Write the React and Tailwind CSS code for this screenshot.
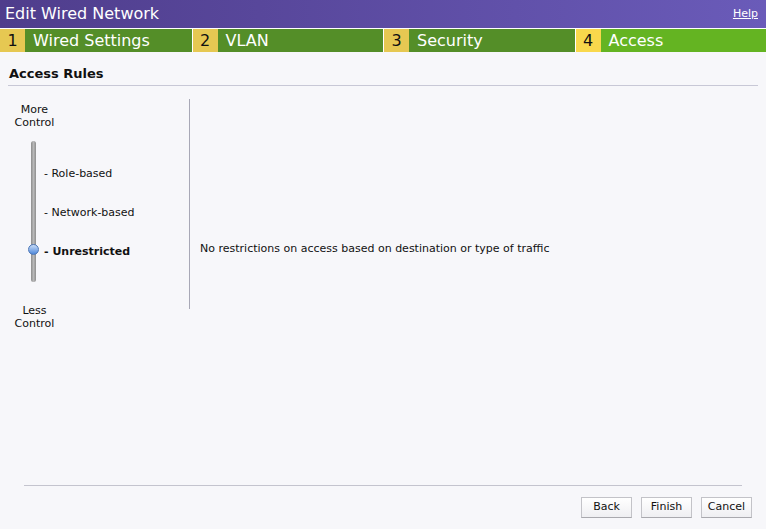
const steps = [
  { n: "1", label: "Wired Settings" },
  { n: "2", label: "VLAN" },
  { n: "3", label: "Security" },
  { n: "4", label: "Access", active: true },
];

function App() {
  return (
    <div
      className="w-[766px] h-[529px] bg-[#f7f7fa] flex flex-col text-[#111]"
      style={{ fontFamily: '"DejaVu Sans", Verdana, sans-serif' }}
    >
      <div className="h-[28px] flex items-center justify-between pl-[5px] pr-[8px] bg-gradient-to-r from-[#4f3d8c] to-[#6a5bb9] text-white">
        <span className="text-[16px] leading-none">Edit Wired Network</span>
        <a className="text-[11px] underline mt-[1px]">Help</a>
      </div>

      <div className="h-[24px] flex border-t border-white">
        {steps.map((s, i) => (
          <div
            key={s.n}
            className={`w-[192px] flex ${i > 0 ? "border-l border-white" : ""}`}
          >
            <div
              className={`w-[25px] flex items-center justify-center text-[16px] ${
                s.active ? "bg-[#f9d84c]" : "bg-[#e6c852]"
              }`}
            >
              {s.n}
            </div>
            <div
              className={`flex-1 flex items-center pl-[8px] text-white text-[16px] ${
                s.active ? "bg-[#64b422]" : "bg-[#548e28]"
              }`}
            >
              {s.label}
            </div>
          </div>
        ))}
      </div>

      <div className="px-[8px] pt-[12px]">
        <div className="text-[13px] font-bold pl-[1px] pb-[1px] border-b border-[#c8c8d6]">
          Access Rules
        </div>
      </div>

      <div className="flex pt-[14px] pl-[8px]">
        <div className="w-[181px] flex flex-col text-[11px]">
          <div className="w-[53px] text-center leading-[13px] mt-[3px]">
            More
            <br />
            Control
          </div>
          <div className="flex mt-[12px]">
            <div className="w-[36px] flex justify-end pr-[8px]">
              <div className="relative w-[5px] h-[141px] rounded-full bg-gradient-to-r from-[#8c8c8c] via-[#b8b8b8] to-[#8e8e8e]">
                <div className="absolute left-[-3px] top-[103px] w-[11px] h-[11px] rounded-full border border-[#4c77b8] bg-gradient-to-b from-[#c9dcf6] to-[#4f88da]" />
              </div>
            </div>
            <div className="flex flex-col pt-[26px] leading-[13px]">
              <div>- Role-based</div>
              <div className="mt-[26px]">- Network-based</div>
              <div className="mt-[26px] font-bold">- Unrestricted</div>
            </div>
          </div>
          <div className="w-[53px] text-center leading-[13px] mt-[22px]">
            Less
            <br />
            Control
          </div>
        </div>
        <div className="w-[1px] h-[210px] -mt-[1px] bg-[#a8a8b6]" />
        <div className="flex-1 pl-[10px] pt-[141px] text-[11px]">
          No restrictions on access based on destination or type of traffic
        </div>
      </div>

      <div className="mt-auto px-[14px] pb-[11px]">
        <div className="mx-[10px] border-t border-[#c4c4ce]" />
        <div className="flex justify-end gap-[9px] mt-[11px]">
          {["Back", "Finish", "Cancel"].map((b) => (
            <button
              key={b}
              className="h-[21px] w-[51px] text-[11px] bg-gradient-to-b from-white to-[#efeff2] border border-[#c3c3c8] border-b-[#a9a9ae]"
            >
              {b}
            </button>
          ))}
        </div>
      </div>
    </div>
  );
}

export default App;
